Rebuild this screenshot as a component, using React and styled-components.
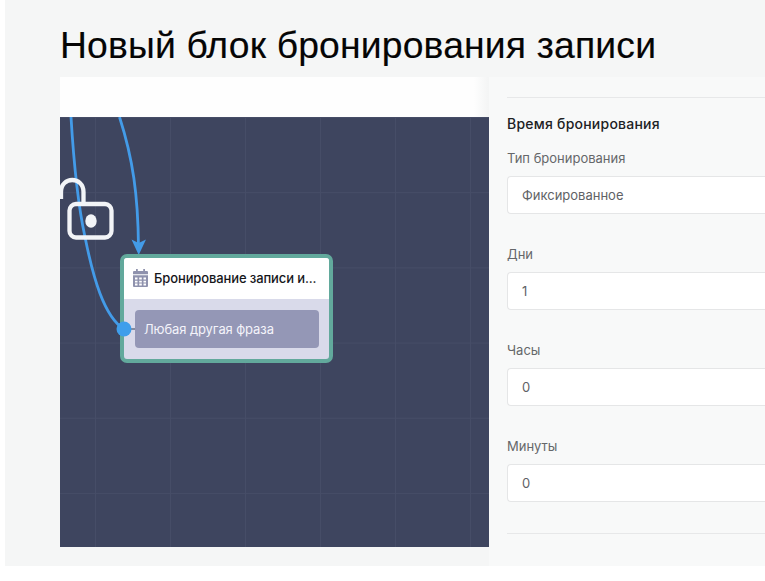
import React from "react";
import styled, { createGlobalStyle } from "styled-components";

const GlobalStyle = createGlobalStyle`
  * { box-sizing: border-box; }
  body { margin: 0; background: #fff; overflow: hidden; }
`;

const Page = styled.main`
  width: 760px;
  height: 566px;
  margin-left: 5px;
  padding: 24px 0 0 55px;
  background: #f5f6f6;
  overflow: hidden;
  font-family: Inter, "Noto Sans", sans-serif;
`;

const Title = styled.h1`
  margin: 0;
  height: 53px;
  font: 400 37.3px/42px "Liberation Sans", Arial, sans-serif;
  letter-spacing: 0.17px;
  -webkit-text-stroke: 0.15px #050505;
  white-space: nowrap;
  color: #050505;
`;

const Workspace = styled.div`
  display: flex;
  width: 705px;
`;

const Editor = styled.section`
  width: 429px;
  flex: none;
`;

const TopBar = styled.div`
  height: 40px;
  background: linear-gradient(to right, #fefefe 414px, #f4f5f5 428px);
`;

const Canvas = styled.div`
  position: relative;
  height: 430px;
  overflow: hidden;
  background-color: #3e455f;
  background-image: linear-gradient(to right, #464d67 1px, transparent 1px),
    linear-gradient(to bottom, #464d67 1px, transparent 1px);
  background-size: 75px 75.2px;
  background-position: 35px 0;
`;

const Overlay = styled.svg`
  position: absolute;
  inset: 0;
  width: 429px;
  height: 430px;
`;

const Node = styled.article`
  position: absolute;
  left: 60px;
  top: 137px;
  width: 213px;
  height: 109px;
  border: 4px solid #62a99c;
  border-radius: 7px;
  background: #d9daea;
  overflow: hidden;
`;

const NodeHeader = styled.header`
  display: flex;
  align-items: center;
  gap: 6px;
  height: 41px;
  padding: 0 0 1px 9px;
  background: #fff;
`;

const NodeTitle = styled.span`
  font-size: 13px;
  font-weight: 500;
  line-height: 18px;
  letter-spacing: -0.12px;
  white-space: nowrap;
  color: #15161a;
`;

const Phrase = styled.div`
  width: 184px;
  height: 38px;
  margin: 11px 0 0 11px;
  padding-left: 9px;
  border-radius: 4px;
  background: #9497b6;
  color: #f3f3fa;
  font-size: 13px;
  line-height: 38px;
  letter-spacing: -0.1px;
  white-space: nowrap;
`;

const Settings = styled.section`
  flex: 1;
  height: 489px;
  padding: 20px 0 0 18px;
  background: #f8f9f9;
`;

const Divider = styled.hr`
  height: 1px;
  margin: 0;
  border: 0;
  background: #e7e8e9;
`;

const SectionTitle = styled.h2`
  margin: 16px 0 0;
  font-size: 14px;
  font-weight: 500;
  line-height: 20px;
  letter-spacing: 0.23px;
  color: #202124;
`;

const Fields = styled.div`
  display: grid;
  gap: 30px;
  margin: 14px 0 31px;
`;

const Field = styled.label`
  display: flex;
  flex-direction: column;
  height: 66px;
`;

const Label = styled.span`
  height: 28px;
  font-size: 13px;
  line-height: 20px;
  color: #65676a;
`;

const Value = styled.span`
  height: 38px;
  padding-left: 14px;
  border: 1px solid #e5e6e7;
  border-right: 0;
  border-radius: 4px 0 0 4px;
  background: #fff;
  color: #606266;
  font-size: 13px;
  line-height: 36px;
`;

const fields = [
  ["Тип бронирования", "Фиксированное"],
  ["Дни", "1"],
  ["Часы", "0"],
  ["Минуты", "0"],
];

const CalendarIcon = () => (
  <svg width="15" height="18" viewBox="0 0 15 17" preserveAspectRatio="none">
    <path
      fill="#8f92ad"
      fillRule="evenodd"
      d="M3 0h1.8v2h5.4V0H12v2h2q1 0 1 1v2H0V3q0-1 1-1h2zM0 6h15v10q0 1-1 1H1q-1 0-1-1zM2 8v2h2.5V8zm4.2 0v2h2.6V8zm4.3 0v2H13V8zM2 11.1v1.6h2.5v-1.6zm4.2 0v1.6h2.6v-1.6zm4.3 0v1.6H13v-1.6zM2 13.8v1.7h2.5v-1.7zm4.2 0v1.7h2.6v-1.7zm4.3 0v1.7H13v-1.7z"
    />
  </svg>
);

export default function App() {
  return (
    <>
      <GlobalStyle />
      <Page>
        <Title>Новый блок бронирования записи</Title>
        <Workspace>
          <Editor>
            <TopBar />
            <Canvas>
              <Overlay viewBox="0 0 429 430">
                <g fill="none" stroke="#439be8" strokeWidth="2.8">
                  <path d="M11 0C14 50 18 88 25 120C33 160 44 200 64 212" />
                  <path d="M59.5 0C73 42 78 78 78.500 130" />
                </g>
                <path fill="#439be8" d="M71.5 122.5l7.2 3.5 7.3-3.5-7.3 15.5z" />
                <g fill="none" stroke="#f2f4f7" strokeWidth="4.300">
                  <path d="M1 82V75C1 59 23.500 59 23.500 75V86" />
                  <rect x="9.500" y="87" width="42" height="33.500" rx="6.500" />
                </g>
                <ellipse cx="31" cy="104" rx="5.700" ry="6.700" fill="#f2f4f7" />
              </Overlay>
              <Node>
                <NodeHeader>
                  <CalendarIcon />
                  <NodeTitle>Бронирование записи и...</NodeTitle>
                </NodeHeader>
                <Phrase>Любая другая фраза</Phrase>
              </Node>
              <Overlay viewBox="0 0 429 430">
                <path d="M66 212h9" stroke="#858b9e" strokeWidth="2" />
                <circle cx="64" cy="212" r="7.500" fill="#3f9eeb" />
              </Overlay>
            </Canvas>
          </Editor>
          <Settings>
            <Divider />
            <SectionTitle>Время бронирования</SectionTitle>
            <Fields>
              {fields.map(([label, value]) => (
                <Field key={label}>
                  <Label>{label}</Label>
                  <Value>{value}</Value>
                </Field>
              ))}
            </Fields>
            <Divider />
          </Settings>
        </Workspace>
      </Page>
    </>
  );
}
